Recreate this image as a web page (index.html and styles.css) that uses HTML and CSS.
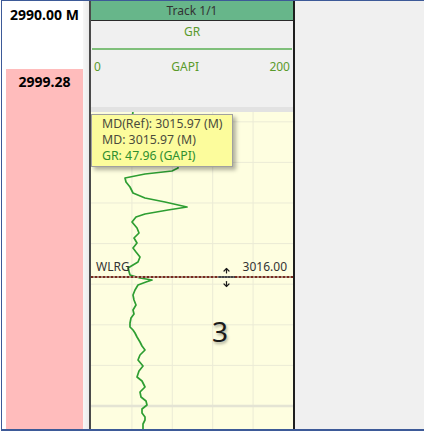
FILE: index.html
```html
<!DOCTYPE html>
<html>
<head>
<meta charset="utf-8">
<link rel="stylesheet" href="styles.css">
</head>
<body>
<div class="frame">
  <div class="depth">
    <div class="depth-top"><span class="depth-label">2990.00 M</span></div>
    <div class="depth-pink"><span class="depth-label">2999.28</span></div>
  </div>
  <div class="gutter"></div>
  <div class="track">
    <div class="track-title">Track 1/1</div>
    <div class="track-head">
      <div class="curve-name">GR</div>
      <div class="curve-line"></div>
      <div class="scale"><span>0</span><span>GAPI</span><span>200</span></div>
    </div>
    <div class="head-sep"></div>
    <div class="plot">
      <svg class="plot-svg" width="202" height="317" viewBox="0 0 202 317">
        <g stroke="#ebebd6" stroke-width="1" fill="none">
          <line x1="40.9" y1="0" x2="40.9" y2="317"/>
          <line x1="81.3" y1="0" x2="81.3" y2="317"/>
          <line x1="121.7" y1="0" x2="121.7" y2="317"/>
          <line x1="162.1" y1="0" x2="162.1" y2="317"/>
          <line x1="0" y1="9.8" x2="202" y2="9.8"/>
          <line x1="0" y1="50.4" x2="202" y2="50.4"/>
          <line x1="0" y1="91" x2="202" y2="91"/>
          <line x1="0" y1="131.6" x2="202" y2="131.6"/>
          <line x1="0" y1="172.2" x2="202" y2="172.2"/>
          <line x1="0" y1="212.8" x2="202" y2="212.8"/>
          <line x1="0" y1="253.4" x2="202" y2="253.4"/>
        </g>
        <line x1="0" y1="294" x2="202" y2="294" stroke="#e4e4d4" stroke-width="2.5"/>
        <polyline fill="none" stroke="#2e9e32" stroke-width="1.7" stroke-linejoin="round"
          points="42,0 41,6 39,16 43,28 59,40 81,46 87,51 87,56 81,59 54,62 34,66 35,70 39,75 42,81 54,86 74,90 96,95 77,98 54,102 45,105 41,110 46,116 48,121 43,126 46,131 42,136 45,140 49,145 47,150 37,156 39,163 49,166 61,168 55,170 47,173 44,178 42,183 43,188 45,193 42,198 43,202 40,206 39,211 39,215 42,218 44,221 46,225 49,230 51,234 54,238 49,243 47,248 52,254 48,259 46,265 51,269 54,275 49,280 50,285 55,289 56,293 51,297 51,301 54,305 54,308 52,312 52,317"/>
        <line x1="0" y1="165" x2="202" y2="165" stroke="#a89080" stroke-width="2"/>
        <line x1="0" y1="165" x2="202" y2="165" stroke="#7a2a1e" stroke-width="2" stroke-dasharray="2 2"/>
        <g stroke="#1a1a1a" stroke-width="1.2" fill="none" stroke-linecap="round">
          <line x1="135.5" y1="156.5" x2="135.5" y2="161"/>
          <polyline points="133,159 135.5,156.5 138,159"/>
          <line x1="135.5" y1="169.5" x2="135.5" y2="174.5"/>
          <polyline points="133,172 135.5,174.5 138,172"/>
        </g>
        <rect x="127" y="164" width="17" height="2" fill="#444"/>
        <line x1="127" y1="165" x2="144" y2="165" stroke="#999" stroke-width="1" stroke-dasharray="1 2"/>
      </svg>
      <div class="marker-name">WLRG</div>
      <div class="marker-depth">3016.00</div>
      <div class="zone">3</div>
      <div class="tooltip">
        <div class="tip-line">MD(Ref): 3015.97 (M)</div>
        <div class="tip-line">MD: 3015.97 (M)</div>
        <div class="tip-line tip-gr">GR: 47.96 (GAPI)</div>
      </div>
    </div>
  </div>
  <div class="empty"></div>
</div>
</body>
</html>
```

FILE: styles.css
```css
html, body {
  margin: 0;
  padding: 0;
  background: #ffffff;
}

body {
  font-family: "Noto Sans", "Open Sans", sans-serif;
}

.frame {
  display: flex;
  margin-left: 1px;
  width: 422px;
  height: 428px;
  border-left: 1px solid #3d5a98;
  border-top: 1px solid #3d5a98;
  border-bottom: 2px solid #3d5a98;
}

.depth {
  width: 81px;
  display: flex;
  flex-direction: column;
  background: #ffffff;
}

.depth-top {
  height: 68px;
  padding-left: 4px;
  padding-top: 2px;
  box-sizing: border-box;
  text-align: center;
}

.depth-pink {
  flex: 1;
  margin-left: 4px;
  background: #ffbcbc;
  padding-top: 1px;
  text-align: center;
}

.depth-label {
  font-weight: 700;
  font-size: 14px;
  line-height: 16px;
  color: #000000;
}

.gutter {
  width: 6px;
  background: linear-gradient(to right, #f7f7f7, #ebebeb);
}

.track {
  width: 202px;
  display: flex;
  flex-direction: column;
  border-left: 2px solid #4a4a4a;
  border-right: 2px solid #1e1e1e;
}

.track-title {
  height: 19px;
  line-height: 19px;
  border-bottom: 1px solid #2a2a2a;
  background: #67b68a;
  color: #333333;
  font-size: 12px;
  text-align: center;
}

.track-head {
  height: 86px;
  background: #f0f0f0;
  display: flex;
  flex-direction: column;
}

.curve-name {
  margin-top: 3px;
  font-size: 12px;
  line-height: 16px;
  color: #5a9a2c;
  text-align: center;
}

.curve-line {
  margin: 8px 1px 0 1px;
  height: 2px;
  background: #7fbf7a;
}

.scale {
  margin-top: 8px;
  padding: 0 3px;
  display: flex;
  justify-content: space-between;
  font-size: 12px;
  line-height: 17px;
  color: #5a9a2c;
}

.head-sep {
  height: 5px;
  background: #e2e2e2;
}

.plot {
  flex: 1;
  position: relative;
  background: #fefee0;
  overflow: hidden;
}

.plot-svg {
  display: block;
}

.marker-name,
.marker-depth {
  position: absolute;
  top: 149px;
  font-size: 12px;
  line-height: 1;
  color: #333333;
}

.marker-name {
  left: 5px;
}

.marker-depth {
  right: 6px;
}

.zone {
  position: absolute;
  left: 121px;
  top: 205px;
  font-size: 28px;
  line-height: 1;
  color: #1a1a1a;
  text-shadow: 1px 2px 3px rgba(0, 0, 0, 0.35);
}

.tooltip {
  position: absolute;
  left: 0;
  top: 2px;
  width: 142px;
  height: 53px;
  box-sizing: border-box;
  padding: 1px 0 0 10px;
  background: #fcfc9c;
  border: 1px solid #a0a0a0;
  box-shadow: 3px 3px 4px rgba(0, 0, 0, 0.3);
}

.tip-line {
  font-size: 12.3px;
  line-height: 16px;
  color: #4b4b3c;
  white-space: nowrap;
}

.tip-gr {
  color: #2f8f2f;
}

.empty {
  flex: 1;
  background: #f0f0f0;
}
```
